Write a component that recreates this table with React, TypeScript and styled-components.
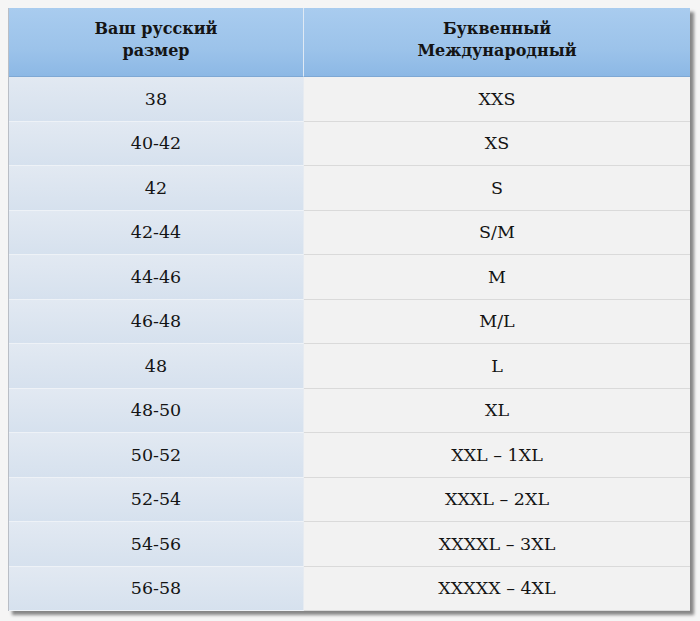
import { Fragment } from "react";
import styled, { createGlobalStyle } from "styled-components";

const GlobalStyle = createGlobalStyle`
  html, body {
    margin: 0;
    padding: 0;
    background-color: #f5f5f5;
  }
`;

const Page = styled.div`
  padding: 8px 11px 10px 8px;
  font-family: "DejaVu Serif", "Liberation Serif", serif;
  color: #141414;
`;

const Table = styled.div`
  width: 681px;
  display: grid;
  grid-template-columns: 295px 1fr;
  grid-template-rows: 69px repeat(12, 44.5px);
  box-shadow: 4px 4px 3px rgba(0, 0, 0, 0.45);
  border-left: 1px solid #b9bec6;
`;

const HeadCell = styled.div<{ $last?: boolean }>`
  display: flex;
  align-items: center;
  justify-content: center;
  text-align: center;
  font-weight: bold;
  font-size: 16px;
  line-height: 22px;
  padding-bottom: 4px;
  background: linear-gradient(180deg, #a9ccef 0%, #9cc3ea 60%, #8cb8e5 100%);
  border-right: ${(p) => (p.$last ? "none" : "1px solid #dfe9f4")};
  border-bottom: 1px solid #7ea8d4;
`;

const SizeCell = styled.div`
  display: flex;
  align-items: center;
  justify-content: center;
  font-size: 17.5px;
  background: linear-gradient(180deg, #e2e9f2 0%, #d6e1ee 100%);
  border-bottom: 1px solid #eef2f7;
  border-right: 1px solid #e6ebf1;
`;

const IntlCell = styled.div`
  display: flex;
  align-items: center;
  justify-content: center;
  font-size: 17.5px;
  background-color: #f2f2f2;
  border-bottom: 1px solid #dadada;
`;

const rows: [string, string][] = [
  ["38", "XXS"],
  ["40-42", "XS"],
  ["42", "S"],
  ["42-44", "S/M"],
  ["44-46", "M"],
  ["46-48", "M/L"],
  ["48", "L"],
  ["48-50", "XL"],
  ["50-52", "XXL – 1XL"],
  ["52-54", "XXXL – 2XL"],
  ["54-56", "XXXXL – 3XL"],
  ["56-58", "XXXXX – 4XL"],
];

export default function App() {
  return (
    <Page>
      <GlobalStyle />
      <Table>
        <HeadCell>
          Ваш русский
          <br />
          размер
        </HeadCell>
        <HeadCell $last>
          Буквенный
          <br />
          Международный
        </HeadCell>
        {rows.map(([ru, intl]) => (
          <Fragment key={ru}>
            <SizeCell>{ru}</SizeCell>
            <IntlCell>{intl}</IntlCell>
          </Fragment>
        ))}
      </Table>
    </Page>
  );
}
